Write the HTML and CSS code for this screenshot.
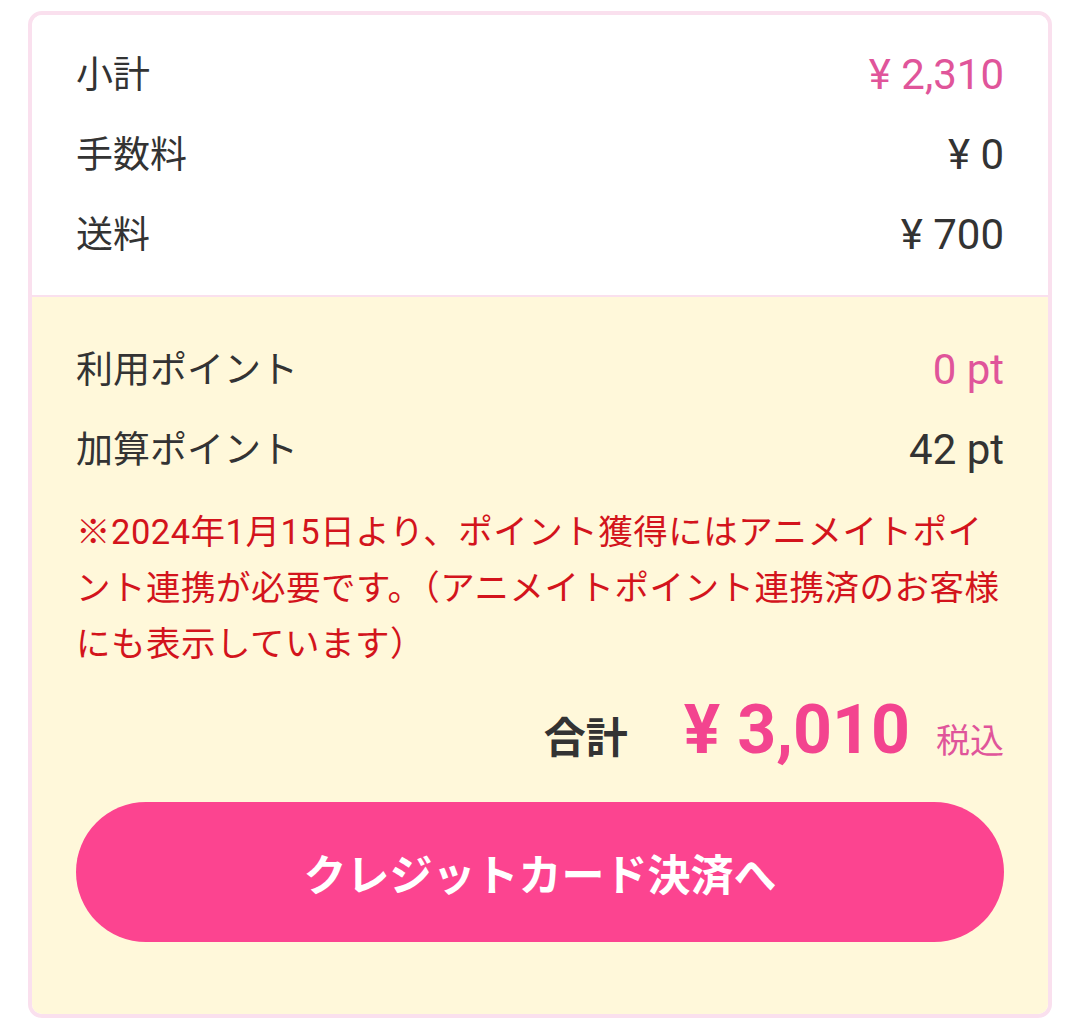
FILE: index.html
```html
<!DOCTYPE html>
<html lang="ja">
<head>
    <meta charset="UTF-8">
    <meta name="viewport" content="width=device-width, initial-scale=1.0">
    <title>ご注文内容</title>
    <link rel="stylesheet" href="styles.css">
</head>
<body>
    <div class="summary">
        <div class="section section-price">
            <div class="row">
                <span class="label">小計</span>
                <span class="value pink">¥ 2,310</span>
            </div>
            <div class="row">
                <span class="label">手数料</span>
                <span class="value">¥ 0</span>
            </div>
            <div class="row">
                <span class="label">送料</span>
                <span class="value">¥ 700</span>
            </div>
        </div>
        <div class="section section-total">
            <div class="row">
                <span class="label">利用ポイント</span>
                <span class="value pink">0 pt</span>
            </div>
            <div class="row">
                <span class="label">加算ポイント</span>
                <span class="value">42 pt</span>
            </div>
            <p class="notice">※2024年1月15日より、ポイント獲得にはアニメイトポイント連携が必要です。（アニメイトポイント連携済のお客様にも表示しています）</p>
            <div class="total">
                <span class="total-label">合計</span>
                <span class="total-price">¥ 3,010</span>
                <span class="tax">税込</span>
            </div>
            <button class="pay-button" type="button">クレジットカード決済へ</button>
        </div>
    </div>
</body>
</html>
```

FILE: styles.css
```css
body {
    margin: 0;
    padding: 11px 28px 10px;
    background-color: #fff;
    font-family: Roboto, "Noto Sans CJK JP", sans-serif;
    color: #333;
}
.summary {
    border: 4px solid #fae0ee;
    border-radius: 14px;
    overflow: hidden;
}
.section {
    padding: 19px 44px 21px;
}
.section-price {
    background-color: #fff;
    border-bottom: 2px solid #fae0ee;
}
.section-total {
    background-color: #fff8da;
    padding-top: 32px;
    padding-bottom: 72px;
}
.row {
    display: flex;
    justify-content: space-between;
    align-items: center;
    height: 80px;
}
.label {
    font-family: "Noto Sans CJK JP", sans-serif;
    font-size: 37px;
    line-height: 1.2;
    padding-bottom: 3px;
}
.value {
    font-size: 42px;
}
.pink {
    color: #e0559a;
}
.notice {
    margin: 15px 0 0;
    font-family: Roboto, "Noto Sans CJK JP", sans-serif;
    font-size: 34.5px;
    line-height: 56px;
    letter-spacing: 0.5px;
    color: #d3141c;
}
.total {
    display: flex;
    justify-content: flex-end;
    align-items: baseline;
    margin-top: 18px;
    height: 80px;
}
.total-label {
    font-family: "Noto Sans CJK JP", sans-serif;
    font-size: 42px;
    font-weight: bold;
    color: #333;
    margin-right: 56px;
}
.total-price {
    font-size: 68px;
    font-weight: bold;
    color: #f3448f;
    margin-right: 26px;
}
.tax {
    font-family: "Noto Sans CJK JP", sans-serif;
    font-size: 34px;
    color: #e0559a;
}
.pay-button {
    display: block;
    width: 100%;
    height: 140px;
    margin-top: 32px;
    border: none;
    border-radius: 70px;
    background-color: #fc4490;
    color: #fff;
    font-family: "Noto Sans CJK JP", sans-serif;
    font-size: 43px;
    font-weight: bold;
}
```
